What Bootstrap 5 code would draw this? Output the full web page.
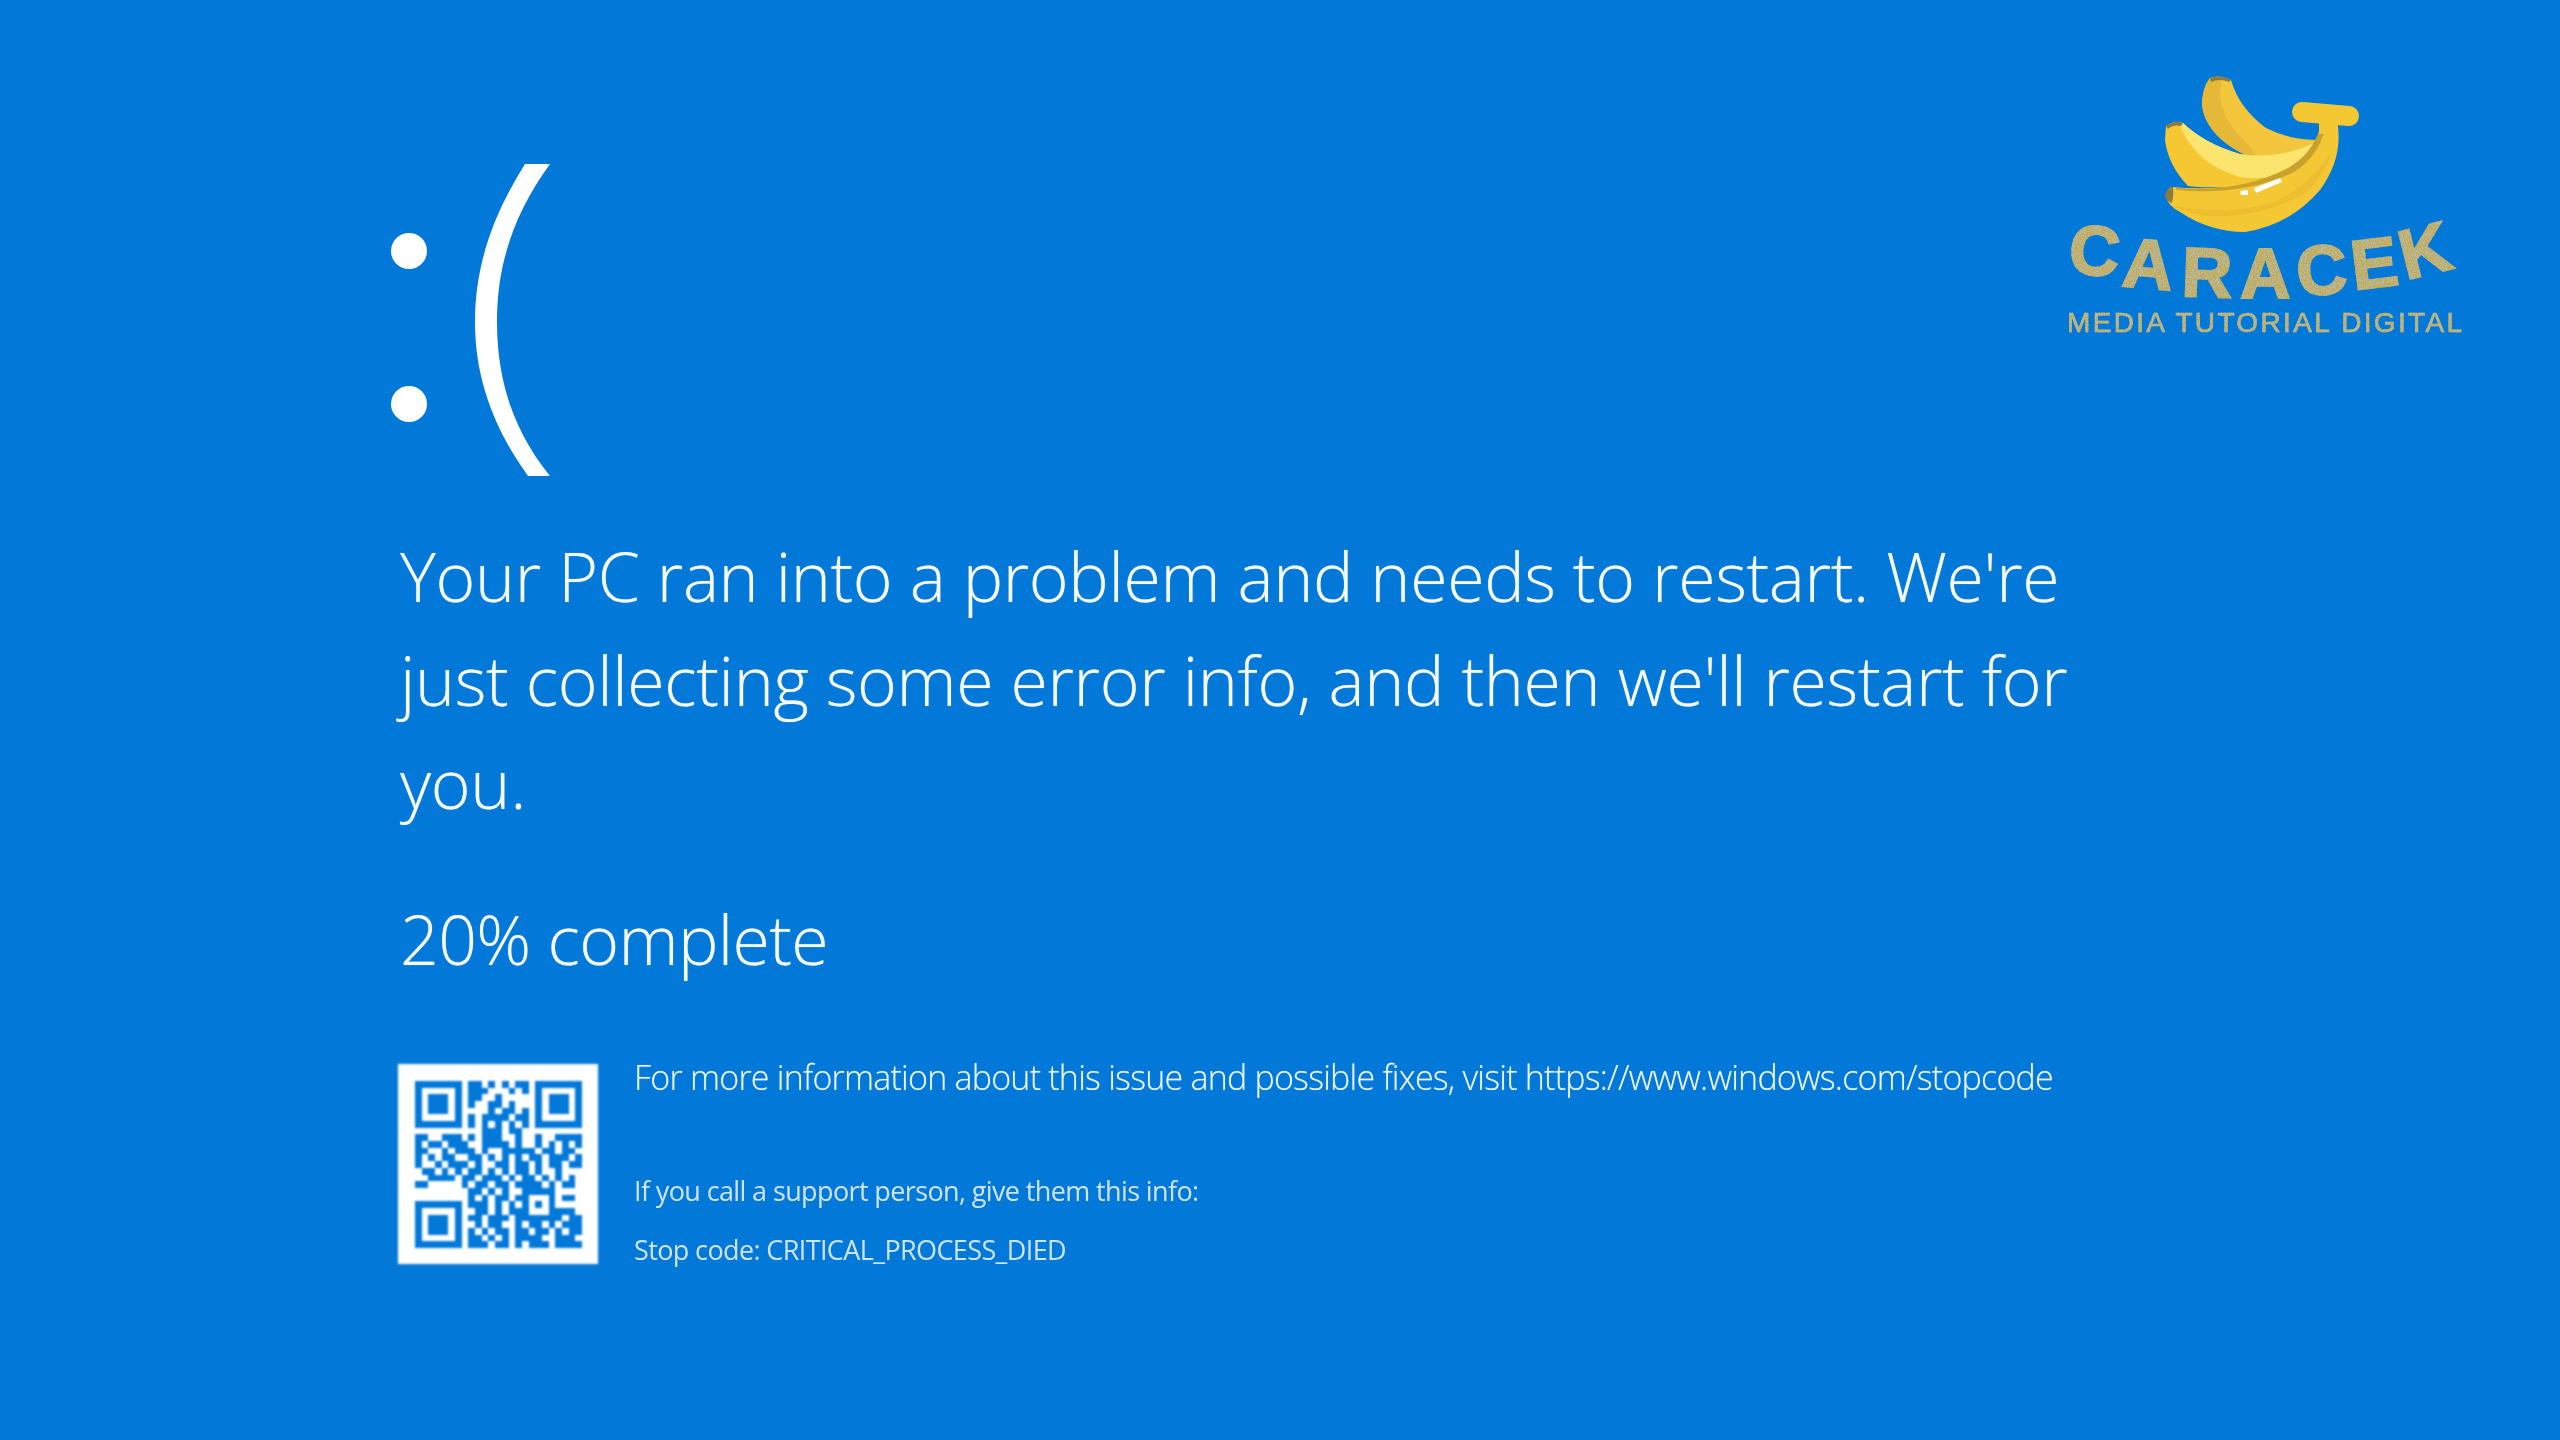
<!DOCTYPE html>
<html lang="en">
<head>
<meta charset="utf-8">
<title>Your PC ran into a problem</title>
<link href="https://cdn.jsdelivr.net/npm/bootstrap@5.3.0/dist/css/bootstrap.min.css" rel="stylesheet">
<style>
html,body{height:100%;margin:0}
body{background:#0278d9;color:#fff;overflow:hidden;font-family:"Open Sans","Noto Sans",sans-serif}
.bsod-page{width:2560px;height:1440px}
.bsod-main{padding:164px 0 0 400px;min-width:0}
.bsod-face{display:block;width:160px;height:312px;margin-left:-10px}
.soft{filter:blur(.6px)}
.bsod-msg,.bsod-pct{font-size:68px;font-weight:300;line-height:103.5px;color:#f7fbff;text-shadow:0 0 1px rgba(255,255,255,.55)}
.bsod-msg{margin:48px 0 0;letter-spacing:-.36px;white-space:nowrap}
.bsod-pct{margin:52px 0 0;letter-spacing:-.65px}
.bsod-foot{margin-top:74px;gap:36px}
.qr-box{width:200px;height:200px;background:#fff;flex:none;padding:17px;margin-left:-2px;filter:blur(.9px)}
.qr-box svg{display:block;width:167px;height:167px}
.info-main{font-size:34px;font-weight:300;line-height:46px;margin:-10px 0 0;color:#eef6fd;white-space:nowrap;letter-spacing:-.78px;text-shadow:0 0 1px rgba(255,255,255,.45)}
.info-sub{font-size:27px;font-weight:400;line-height:40px;margin:0;color:#cfe4f7;white-space:nowrap;letter-spacing:-.62px}
.info-call{margin-top:71px}
.info-code{margin-top:19px}
.bsod-logo{padding:60px 70px 0 0}
.bsod-logo svg{display:block;width:450px;height:290px}
.logo-big{font-family:"Liberation Sans",sans-serif;font-weight:700;font-size:70px;fill:#c8aa3f;stroke:#c8aa3f;stroke-width:2}
.logo-small{font-family:"Liberation Sans",sans-serif;font-size:28px;fill:#c4ad52;stroke:#c4ad52;stroke-width:.6}
</style>
</head>
<body>
<div class="bsod-page d-flex">
  <main class="bsod-main flex-grow-1">
    <svg class="bsod-face soft" viewBox="0 0 160 312" role="img" aria-label=":(">
      <circle cx="19" cy="87" r="18" fill="#fff"/>
      <circle cx="19" cy="240" r="18" fill="#fff"/>
      <path fill="#fff" d="M135 0H160C123 51 107 101 107 158C107 216 123 266 160 312H138C105 266 85 216 85 158C85 101 103 51 135 0Z"/>
    </svg>
    <p class="bsod-msg soft">Your PC ran into a problem and needs to restart. We're<br>just collecting some error info, and then we'll restart for<br>you.</p>
    <p class="bsod-pct soft">20% complete</p>
    <div class="bsod-foot d-flex">
      <div class="qr-box">
        <svg viewBox="0 0 25 25" shape-rendering="crispEdges" role="img" aria-label="QR code"><path id="qrPath" fill="#0278d9" d=""/></svg>
      </div>
      <div class="soft">
        <p class="info-main">For more information about this issue and possible fixes, visit https://www.windows.com/stopcode</p>
        <p class="info-sub info-call">If you call a support person, give them this info:</p>
        <p class="info-sub info-code">Stop code: CRITICAL_PROCESS_DIED</p>
      </div>
    </div>
  </main>
  <aside class="bsod-logo flex-shrink-0">
    <svg viewBox="0 0 450 290" role="img" aria-label="Caracek logo">
      <defs>
        <filter id="speck" x="-5%" y="-5%" width="110%" height="110%">
          <feTurbulence type="fractalNoise" baseFrequency="1.1" numOctaves="2" seed="4" result="n"/>
          <feColorMatrix in="n" type="matrix" values="0 0 0 0 .42  0 0 0 0 .5  0 0 0 0 .5  0 0 0 5 -2.2" result="d"/>
          <feComposite in="d" in2="SourceAlpha" operator="in" result="dots"/>
          <feMerge><feMergeNode in="SourceGraphic"/><feMergeNode in="dots"/></feMerge>
        </filter>
      </defs>
      <!-- back banana -->
      <path fill="#f3c63c" d="M170 18Q179 14 191 20Q199 48 226 68Q250 80 279 80L262 97Q222 104 196 90Q166 72 162 46Q162 28 170 18Z"/>
      <path fill="#e6b838" d="M170 18Q179 15 181 22Q176 50 198 74Q210 86 218 98Q205 96 196 90Q166 72 162 46Q162 28 170 18Z"/>
      <path fill="#8e7a3c" d="M170 18Q179 14 191 20L189 22Q179 18 171 22Z"/>
      <!-- middle banana -->
      <path fill="#f5c833" d="M126 66Q134 60 143 63Q165 84 200 94Q240 100 278 82L262 108Q225 125 190 127Q160 128 148 126Q128 105 125 80Z"/>
      <path fill="#fbe56f" d="M139 63L143 63Q165 84 200 94Q240 100 276 82Q264 100 240 115Q215 120 200 117Q170 108 155 90Q143 76 139 63Z"/>
      <path fill="#8e7a3c" d="M126 66Q134 60 143 63L141 66Q133 64 128 69Z"/>
      <!-- front banana -->
      <path fill="#f4c834" d="M131 127Q200 133 250 110Q276 95 284 70L298 67Q302 100 280 130Q250 165 205 172Q170 172 140 152Q128 146 126 136Q127 129 131 127Z"/>
      <path fill="#eebd30" d="M132 146Q190 156 235 142Q268 126 290 95Q288 112 266 132Q225 158 165 156Q146 152 132 146Z"/>
      <path fill="#c9a22e" d="M136 128Q200 133 248 108Q272 94 280 68L285 68Q279 96 254 112Q205 136 136 130Z"/>
      <path fill="#8e7a3c" d="M131 127Q126 130 125 136Q126 141 132 143Q134 135 133 127Z"/>
      <path fill="#f5c833" d="M279 60H298L298 74H279Z"/>
      <path fill="none" stroke="#f5c833" stroke-width="20" stroke-linecap="round" d="M262 52L309 56"/>
      <path fill="#fff" d="M200 131L208 130L208 135L201 135Z"/>
      <path fill="#fff" d="M214 128L240 118L242 122L216 133Z"/>
      <!-- wordmark -->
      <g filter="url(#speck)">
        <text class="logo-big" transform="translate(27 212) rotate(6)">C</text>
        <text class="logo-big" transform="translate(81 226) rotate(5)">A</text>
        <text class="logo-big" transform="translate(141 236) rotate(2)">R</text>
        <text class="logo-big" transform="translate(200 238) rotate(0)">A</text>
        <text class="logo-big" transform="translate(258 236) rotate(-4)">C</text>
        <text class="logo-big" transform="translate(314 230) rotate(-7)">E</text>
        <text class="logo-big" transform="translate(366 220) rotate(-14)">K</text>
        <text class="logo-small" x="27" y="272" textLength="395" lengthAdjust="spacing">MEDIA TUTORIAL DIGITAL</text>
      </g>
    </svg>
  </aside>
</div>
<script>
var rows=[
"#######.##.#.#.##.#######",
"#.....#.###...#.#.#.....#",
"#.###.#.##..#.....#.###.#",
"#.###.#.#..##.#...#.###.#",
"#.###.#....#.##.#.#.###.#",
"#.....#.#.####.##.#.....#",
"#######.#.#.#.#.#.#######",
"..........###.##.........",
"##..###.#.###..#..#..####",
"#.##.###..####.#..#.#.#.#",
"##..#.###.#..#####.##.##.",
"#.#.##..##.#.#.#.##.###.#",
"#..#.###.#..##.##.#.##.##",
".##.#.#.##.#.#.##.#..#...",
"..####.##.###.#.##.#.#.#.",
"##.....#.##.##.####.#.##.",
"........##.#.#..#####....",
"........#.#.##.##...#.##.",
"#######.###.#.#.#.#.#....",
"#.....#..##.#.###...####.",
"#.###.#.##.###.#######.##",
"#.###.#..#.##..#.##.#.###",
"#.###.#.#.#.##.##.##.#.##",
"#.....#.##.#.#.####..###.",
"#######.###.##.#.###.####"];
var d="";rows.forEach(function(r,y){r.split("").forEach(function(c,x){if(c==="#")d+="M"+x+" "+y+"h1v1h-1z";});});
document.getElementById("qrPath").setAttribute("d",d);
</script>
<script src="https://cdn.jsdelivr.net/npm/bootstrap@5.3.0/dist/js/bootstrap.bundle.min.js"></script>
</body>
</html>
